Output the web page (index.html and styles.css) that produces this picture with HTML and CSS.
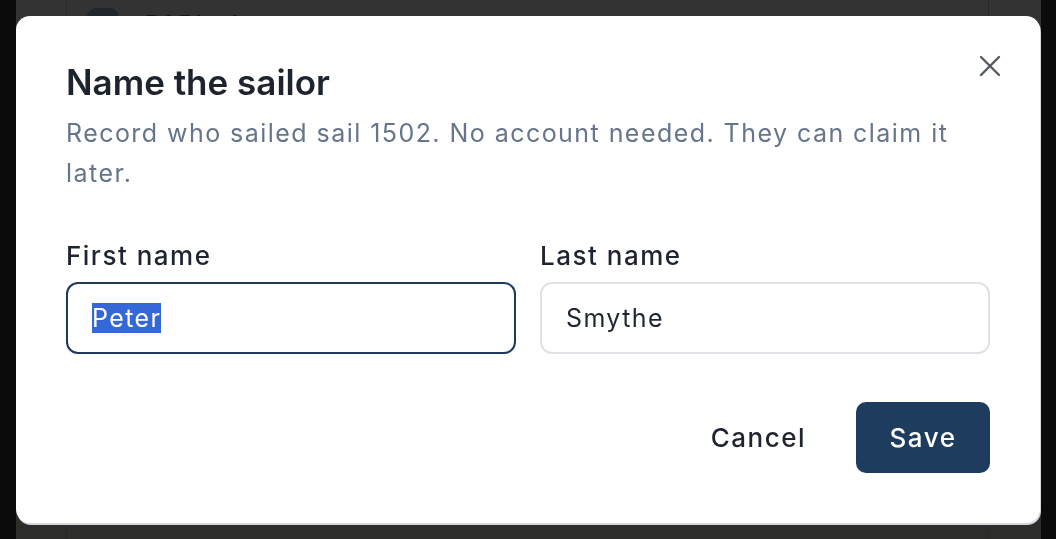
FILE: index.html
```html
<!DOCTYPE html>
<html lang="en">
  <head>
    <meta charset="UTF-8">
    <meta name="viewport" content="width=device-width, initial-scale=1.0">
    <title>Sails</title>
    <link rel="stylesheet" href="styles.css">
  </head>
  <body>

    <main class="page">
      <div class="pageColumn">
        <div class="sailRow">
          <span class="sailAvatar"></span>
          <span class="sailName">D1 Dinghy</span>
        </div>
      </div>
    </main>

    <div class="overlay">
      <section class="modal" role="dialog" aria-labelledby="modalTitle">
        <button class="closeButton" aria-label="Close">
          <svg width="24" height="24" viewBox="0 0 24 24" fill="none" stroke="currentColor" stroke-width="2.4" stroke-linecap="round">
            <path d="M3 3 L21 21 M21 3 L3 21"></path>
          </svg>
        </button>

        <h2 class="modalTitle" id="modalTitle">Name the sailor</h2>
        <p class="modalText">Record who sailed sail 1502. No account needed. They can claim it later.</p>

        <div class="fields">
          <label class="field">
            <span class="fieldLabel">First name</span>
            <input class="fieldInput js-first" type="text" value="Peter">
          </label>
          <label class="field">
            <span class="fieldLabel">Last name</span>
            <input class="fieldInput" type="text" value="Smythe">
          </label>
        </div>

        <div class="actions">
          <button class="cancelButton">Cancel</button>
          <button class="saveButton">Save</button>
        </div>
      </section>
    </div>

    <script src="script.js"></script>
  </body>
</html>
```

FILE: styles.css
```css
* {
  box-sizing: border-box;
}

body {
  margin: 0;
  height: 539px;
  overflow: hidden;
  font-family: Inter, "Noto Sans", Arial, sans-serif;
  background-color: rgb(11, 11, 11);
}

.page {
  height: 100%;
  margin: 0 15px 0 16px;
  background: linear-gradient(rgb(51, 51, 51) 50%, rgb(45, 46, 41) 50%);
}

.pageColumn {
  height: 100%;
  margin: 0 52px 0 50px;
  border-left: 1px solid rgb(40, 40, 40);
  border-right: 1px solid rgb(40, 40, 40);
  padding: 8px 20px;
}

.sailRow {
  display: flex;
  align-items: center;
  gap: 26px;
}

.sailAvatar {
  width: 32px;
  height: 32px;
  border-radius: 9px;
  background-color: rgb(32, 38, 44);
}

.sailName {
  font-size: 24px;
  font-weight: 600;
  color: rgb(20, 24, 28);
}

.overlay {
  position: fixed;
  inset: 0;
  padding: 16px 16px 16px 16px;
  display: flex;
}

.modal {
  position: relative;
  flex: 1;
  padding: 44px 50px 50px 50px;
  background-color: white;
  border-radius: 14px;
  box-shadow: 1px 2px 0 rgb(214, 216, 222);
}

.closeButton {
  position: absolute;
  top: 38px;
  right: 38px;
  padding: 0;
  border: none;
  background: none;
  color: rgb(85, 90, 97);
  cursor: pointer;
}

.modalTitle {
  margin: 0;
  font-size: 35px;
  line-height: 44px;
  font-weight: 600;
  color: rgb(30, 36, 46);
}

.modalText {
  margin: 9px 0 0 0;
  font-size: 25px;
  line-height: 40px;
  letter-spacing: 1.45px;
  color: rgb(102, 117, 138);
}

.fields {
  display: grid;
  grid-template-columns: 1fr 1fr;
  gap: 24px;
  margin-top: 47px;
}

.field {
  display: flex;
  flex-direction: column;
  gap: 10px;
}

.fieldLabel {
  font-size: 26px;
  line-height: 32px;
  font-weight: 500;
  letter-spacing: 1.5px;
  color: rgb(31, 37, 48);
}

.fieldInput {
  width: 100%;
  height: 72px;
  padding: 0 24px;
  font-family: inherit;
  font-size: 25px;
  letter-spacing: 1.4px;
  color: rgb(31, 37, 48);
  border: 2px solid rgb(224, 226, 231);
  border-radius: 12px;
  background-color: white;
}

.fieldInput:focus {
  outline: none;
  border-color: rgb(30, 58, 90);
}

.fieldInput::selection {
  background-color: rgb(52, 104, 214);
  color: white;
}

.actions {
  display: flex;
  justify-content: flex-end;
  align-items: center;
  gap: 26px;
  margin-top: 48px;
}

.cancelButton {
  padding: 0 24px;
  height: 71px;
  font-family: inherit;
  font-size: 26px;
  font-weight: 500;
  letter-spacing: 1.5px;
  color: rgb(31, 37, 48);
  border: none;
  background: none;
  cursor: pointer;
}

.saveButton {
  width: 134px;
  height: 71px;
  font-family: inherit;
  font-size: 26px;
  font-weight: 500;
  letter-spacing: 1.5px;
  color: white;
  border: none;
  border-radius: 10px;
  background-color: rgb(30, 61, 94);
  cursor: pointer;
}
```

FILE: script.js
```js
// open the dialog with the first name ready to be typed over
const firstInput = document.querySelector('.js-first');
firstInput.focus();
firstInput.select();
```
